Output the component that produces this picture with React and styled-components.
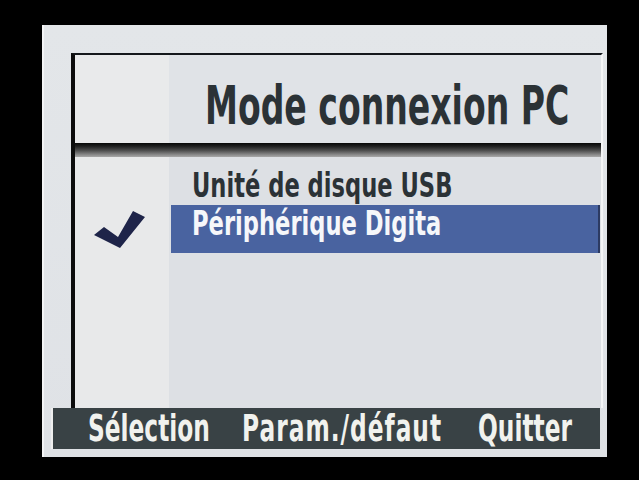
import styled, { createGlobalStyle } from 'styled-components';

const GlobalStyle = createGlobalStyle`
    html, body {
        margin: 0;
        padding: 0;
        background: #000000;
    }
    body {
        font-family: 'DejaVu Sans', 'Liberation Sans', sans-serif;
    }
`;

const items = [
    { label: 'Unité de disque USB', selected: false },
    { label: 'Périphérique Digita', selected: true },
];

const softkeys = [
    { label: 'Sélection', spacing: 0 },
    { label: 'Param./défaut', spacing: 1 },
    { label: 'Quitter', spacing: 0 },
];

function CheckMark () {
    return (
        <svg width="54" height="42" viewBox="0 0 54 42">
            <polygon points="2,27 12,19 26,29 41,3 53,9 28,40" fill="#1e2449" />
        </svg>
    );
}

export default function App () {
    return (
        <>
            <GlobalStyle />
            <Screen>
                <Panel>
                    <Frame>
                        <HeaderSide />
                        <HeaderTitle>
                            <Squeeze $size={54} $scale={0.613}>Mode connexion PC</Squeeze>
                        </HeaderTitle>
                        <Separator />
                        <CheckColumn>
                            <CheckMark />
                        </CheckColumn>
                        <List>
                            {items.map((item) => (
                                <Row key={item.label} $selected={item.selected}>
                                    <Squeeze $size={34} $scale={0.665}>{item.label}</Squeeze>
                                </Row>
                            ))}
                        </List>
                    </Frame>
                    <Footer>
                        {softkeys.map((key) => (
                            <SoftKey key={key.label}>
                                <Squeeze $size={37} $scale={0.63} $spacing={key.spacing}>{key.label}</Squeeze>
                            </SoftKey>
                        ))}
                    </Footer>
                </Panel>
            </Screen>
        </>
    );
}

const Screen = styled.div`
    width: 639px;
    height: 480px;
    box-sizing: border-box;
    padding: 25px 0 0 42px;
    background: #000000;
    overflow: hidden;
`;

const Panel = styled.div`
    width: 565px;
    height: 432px;
    box-sizing: border-box;
    display: flex;
    flex-direction: column;
    padding-top: 28px;
    background: linear-gradient(180deg, #e3e6e9 0%, #dfe2e6 100%);
    border-left: 2px solid #f3f4f5;
`;

const Frame = styled.div`
    width: 532px;
    height: 355px;
    margin-left: 27px;
    box-sizing: border-box;
    display: grid;
    grid-template-columns: 94px 1fr;
    grid-template-rows: 88px 14px 1fr;
    border-top: 2px solid #15181c;
    border-left: 4px solid #0c0c0c;
    border-right: 2px solid #f4f5f6;
`;

const HeaderSide = styled.div`
    background: #e9eaeb;
`;

const HeaderTitle = styled.div`
    padding: 23px 0 0 36px;
    background: #e0e3e7;
    color: #2b3236;
    font-weight: 700;
`;

// narrow LCD lettering: small type stretched up to the full cap height
const Squeeze = styled.span`
    display: block;
    font-size: ${(p) => p.$size * p.$scale}px;
    line-height: ${(p) => p.$size * p.$scale}px;
    letter-spacing: ${(p) => p.$spacing || 0}px;
    white-space: nowrap;
    transform: scaleY(${(p) => 1 / p.$scale});
    transform-origin: left top;
`;

const Separator = styled.div`
    grid-column: 1 / -1;
    background: linear-gradient(180deg, #070707 0%, #1e1e1e 22%, #505050 55%, #8c8c8c 85%, #a8a8a8 100%);
`;

const CheckColumn = styled.div`
    padding: 51px 0 0 17px;
    background: #e8e9ea;
`;

const List = styled.div`
    display: flex;
    flex-direction: column;
    padding-top: 10px;
    padding-left: 2px;
    background: #dde0e4;
`;

const Row = styled.div`
    height: ${(p) => (p.$selected ? 48 : 38)}px;
    box-sizing: border-box;
    margin-right: 1px;
    padding: 1px 0 0 21px;
    font-weight: 700;
    color: ${(p) => (p.$selected ? '#f6f7fa' : '#2b3236')};
    background: ${(p) => (p.$selected ? '#4963a0' : 'transparent')};
    border-right: 2px solid ${(p) => (p.$selected ? '#2c3a62' : 'transparent')};
`;

const Footer = styled.div`
    width: 549px;
    height: 41px;
    margin-left: 7px;
    box-sizing: border-box;
    display: grid;
    grid-template-columns: 154px 236px 1fr;
    padding: 1px 0 0 35px;
    background: #394245;
    border-left: 2px solid #eeeeee;
`;

const SoftKey = styled.div`
    min-width: 0;
    color: #f1f2ee;
    font-weight: 700;
`;
